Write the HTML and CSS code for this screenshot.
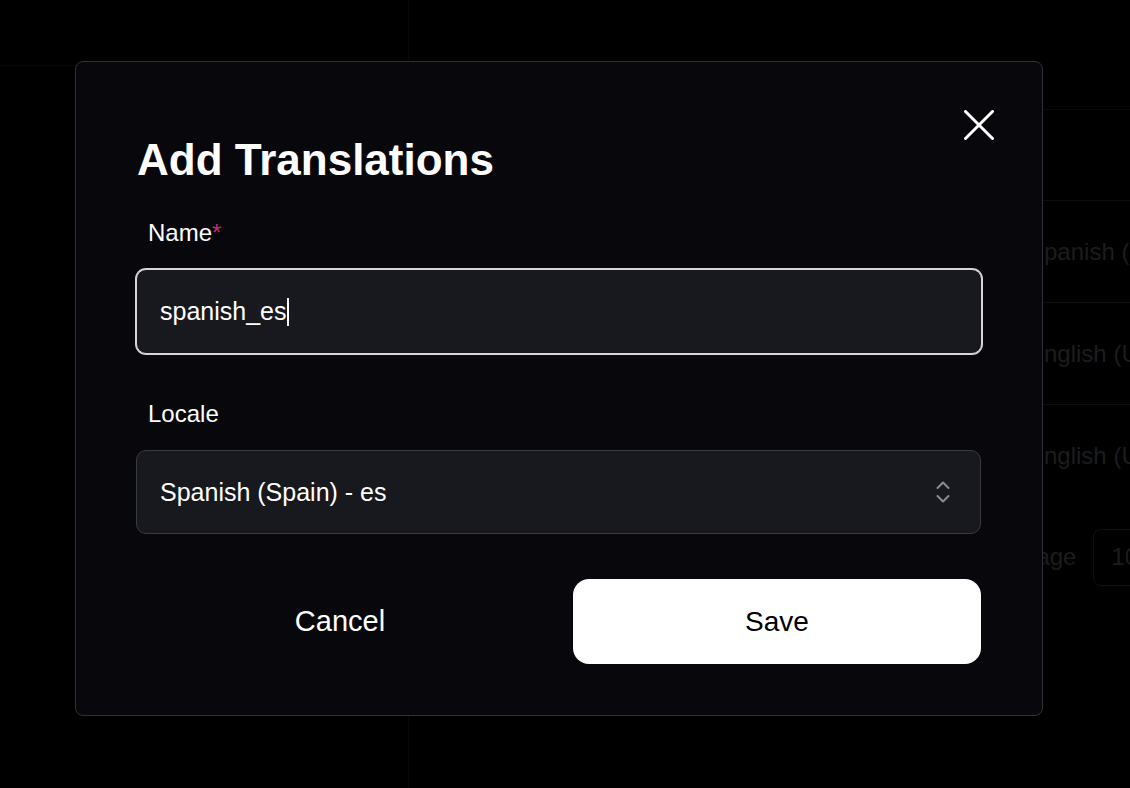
FILE: index.html
```html
<!DOCTYPE html>
<html lang="en">
<head>
<meta charset="utf-8">
<title>Add Translations</title>
<link rel="stylesheet" href="styles.css">
</head>
<body>
<div class="app">
  <aside class="sidebar">
    <div class="sidebar-head"></div>
  </aside>
  <main class="main">
    <div class="main-head"></div>
    <div class="table">
      <div class="spacer"></div>
      <div class="row"><span class="cell">Spanish (Spain)</span></div>
      <div class="row"><span class="cell">English (United States)</span></div>
      <div class="row"><span class="cell">English (United Kingdom)</span></div>
      <div class="foot"><span class="cell">Rows per page</span><span class="pager">10</span></div>
    </div>
  </main>
</div>

<div class="modal" role="dialog" aria-labelledby="modal-title">
  <button class="close" aria-label="Close">
    <svg width="30" height="30" viewBox="0 0 30 30"><path d="M1.5 1.5 L28.5 28.5 M28.5 1.5 L1.5 28.5" stroke="#ffffff" stroke-width="3" stroke-linecap="round" fill="none"/></svg>
  </button>
  <h1 id="modal-title" class="title">Add Translations</h1>
  <div class="field">
    <label class="label">Name<span class="req">*</span></label>
    <div class="input focused"><span class="value">spanish_es</span><span class="caret"></span></div>
  </div>
  <div class="field">
    <label class="label">Locale</label>
    <div class="input select">
      <span class="value">Spanish (Spain) - es</span>
      <svg class="chev" width="14" height="22" viewBox="0 0 14 22"><path d="M1.5 7 L7 1.5 L12.5 7 M1.5 15 L7 20.5 L12.5 15" stroke="#8c8c93" stroke-width="2" stroke-linecap="round" stroke-linejoin="round" fill="none"/></svg>
    </div>
  </div>
  <div class="actions">
    <button class="btn cancel">Cancel</button>
    <button class="btn save">Save</button>
  </div>
</div>
</body>
</html>
```

FILE: styles.css
```css
* { box-sizing: border-box; }
html, body { margin: 0; padding: 0; }
body {
  background: #000;
  width: 1130px;
  height: 788px;
  overflow: hidden;
  font-family: "Liberation Sans", Arial, sans-serif;
  color: #fff;
}

/* faint background app */
.app {
  display: grid;
  grid-template-columns: 409px 1fr;
  height: 788px;
}
.sidebar { border-right: 1px solid #080809; }
.sidebar-head { height: 66px; border-bottom: 1px solid #09090a; }
.main { overflow: hidden; }
.main-head { height: 110px; border-bottom: 1px solid #0b0b0c; }
.table { padding-left: 619px; }
.spacer { height: 90px; }
.row {
  height: 102px;
  border-top: 1px solid #0d0d0f;
  display: flex;
  align-items: center;
  white-space: nowrap;
}
.row:last-of-type { border-bottom: 1px solid #0d0d0f; }
.cell { color: #1c1c1f; font-size: 24px; }
.foot {
  height: 102px;
  display: flex;
  align-items: center;
  white-space: nowrap;
  margin-left: -113px;
}
.pager {
  color: #1c1c1f;
  font-size: 24px;
  height: 57px;
  display: flex;
  align-items: center;
  border-left: 1px solid #0e0e10;
  border-top: 1px solid #0e0e10;
  border-bottom: 1px solid #0e0e10;
  border-radius: 8px 0 0 8px;
  margin-left: 17px;
  padding: 0 40px 0 17px;
}

/* modal */
.modal {
  position: absolute;
  left: 75px;
  top: 61px;
  width: 968px;
  height: 655px;
  background: #08080c;
  border: 1px solid #303137;
  border-radius: 8px;
  padding: 73px 61px 52px 60px;
  display: flex;
  flex-direction: column;
}
.close {
  position: absolute;
  top: 48px;
  right: 48px;
  width: 30px;
  height: 30px;
  padding: 0;
  border: 0;
  background: none;
  display: flex;
}
.title {
  margin: 0 0 34px 1px;
  font-size: 44px;
  line-height: 50px;
  font-weight: 700;
  letter-spacing: 0;
}
.field { display: flex; flex-direction: column; gap: 22px; margin-bottom: 45px; }
.field:first-of-type { margin-bottom: 46px; }
.label {
  font-size: 24px;
  line-height: 28px;
  padding-left: 12px;
  color: #fff;
}
.req { color: #c0306a; }
.input {
  height: 84px;
  border: 1px solid #3a3b41;
  border-radius: 10px;
  background: #18191e;
  display: flex;
  align-items: center;
  padding: 0 23px;
  font-size: 25px;
  color: #fff;
}
.input.focused {
  height: 85px;
  margin-right: -1px;
  border-color: #d6d6da;
  box-shadow: 0 0 0 1px #d6d6da;
}
.caret {
  display: inline-block;
  width: 2px;
  height: 28px;
  background: #fff;
  margin-left: 1px;
}
.select { justify-content: space-between; padding-right: 30px; }
.chev { display: block; }
.actions {
  display: grid;
  grid-template-columns: 1fr 1fr;
  gap: 29px;
}
.btn {
  height: 85px;
  border: 0;
  border-radius: 16px;
  font-family: "Liberation Sans", Arial, sans-serif;
  font-size: 28px;
  cursor: pointer;
}
.cancel { background: transparent; color: #fff; font-size: 29px; }
.save { background: #fff; color: #000; }
```
